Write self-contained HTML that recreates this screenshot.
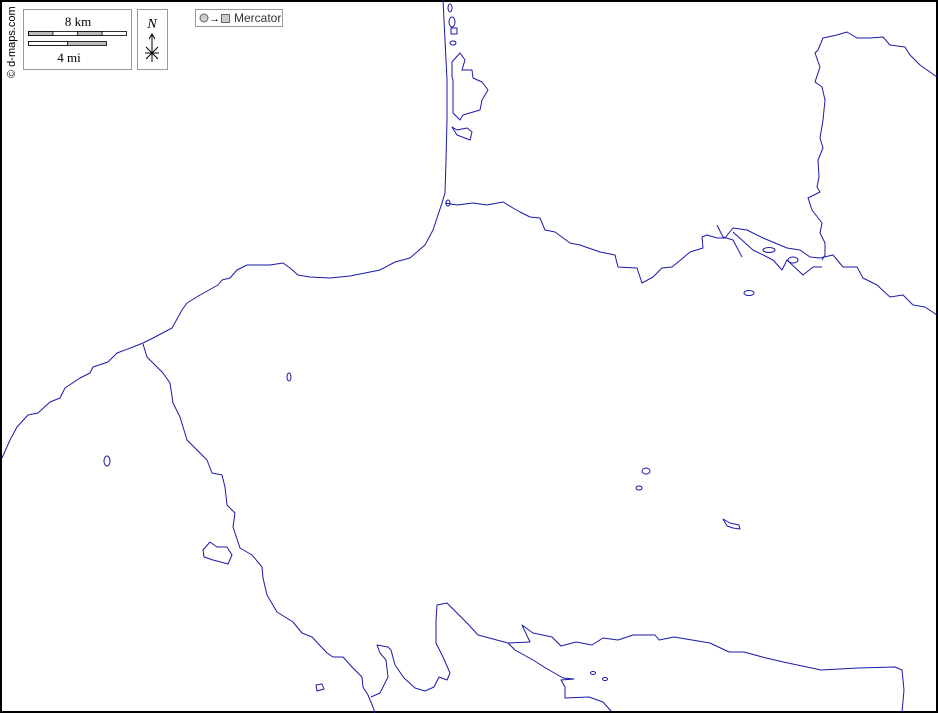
<!DOCTYPE html>
<html><head><meta charset="utf-8"><style>
html,body{margin:0;padding:0;background:#fff}
svg{display:block}
text{font-family:"Liberation Serif",serif}
</style></head><body>
<svg width="938" height="713" viewBox="0 0 938 713" xmlns="http://www.w3.org/2000/svg">
<rect x="1" y="1" width="936" height="711" fill="#fff" stroke="#000" stroke-width="2"/>
<g fill="none" stroke="#1a1aa8" stroke-width="1" stroke-linejoin="round">
<polyline points="443,0 445,40 447,80 447,120 446,160 445,193 442,203 433,230 425,245 410,258 395,262 380,270 350,276 330,278 310,277 298,275 290,268 283,263 270,265 247,265 237,270 230,278 222,280 218,285 200,295 187,303 182,310 172,328 153,338 143,343 133,347 117,353 108,362 93,367 90,373 80,378 65,388 60,398 50,402 38,413 28,415 17,427 10,440 2,458"/>
<polyline points="143,344 147,357 163,373 170,383 173,403 180,417 187,440 197,450 207,460 212,473 222,475 225,487 227,505 235,513 233,527 240,548 252,555 262,567 263,578 267,595 277,612 293,622 302,633 312,637 327,653 333,657 343,657 352,667 362,677 363,687 368,695 373,707 375,713"/>
<polygon points="203,550 210,542 217,547 227,547 232,555 228,564 213,560 204,557"/>
<polygon points="452,77 452,62 460,53 465,60 462,70 472,70 473,78 482,82 488,90 482,100 480,110 463,115 460,120 453,113 453,80"/>
<polygon points="452,127 457,135 470,140 472,132 467,128 457,130"/>
<ellipse cx="450" cy="8" rx="2" ry="4"/>
<ellipse cx="452" cy="22" rx="3" ry="5"/>
<rect x="451" y="28" width="6" height="6"/>
<ellipse cx="453" cy="43" rx="3" ry="2"/>
<ellipse cx="448" cy="203" rx="2" ry="3"/>
<polyline points="445,203 457,205 473,203 487,205 503,202 513,208 520,212 530,217 540,218 545,230 555,232 570,243 580,245 600,252 615,255 618,267 637,268 642,283 653,277 662,268 672,267 683,258 690,252 703,248 702,237 707,235 717,238 725,238 733,228 747,230 763,238 787,248 800,250 810,257 820,258 833,255 843,267 857,267 863,278 877,285 890,297 903,295 913,305 925,307 937,315"/>
<polyline points="717,225 723,237 733,240 742,257"/>
<polyline points="733,232 753,250 773,260 782,270 787,260 803,275 813,267 822,267"/>
<ellipse cx="769" cy="250" rx="6" ry="2.5"/>
<ellipse cx="793" cy="260" rx="5" ry="3"/>
<ellipse cx="749" cy="293" rx="5" ry="2.5"/>
<polyline points="937,77 920,65 910,55 905,47 890,45 883,37 870,38 857,38 847,32 837,35 823,38 818,50 815,53 820,67 815,82 822,87 825,100 823,120 820,138 823,148 818,160 819,177 817,187 820,192 808,198 812,210 822,223 820,233 825,243 825,255 822,260"/>
<ellipse cx="289" cy="377" rx="2" ry="4"/>
<ellipse cx="107" cy="461" rx="3" ry="5"/>
<ellipse cx="646" cy="471" rx="4" ry="3"/>
<ellipse cx="639" cy="488" rx="3" ry="2"/>
<polygon points="723,519 727,526 733,528 740,529 739,525 730,523"/>
<polyline points="371,697 380,693 388,677 386,660 380,653 377,645 388,647 391,650 395,665 404,678 415,688 425,691 434,687 439,677 447,680 450,673 443,657 436,643 436,620 437,605 447,603 467,623 478,635 508,643 530,642 522,625 533,633 552,637 561,646 576,642 592,645 603,638 618,640 633,635 655,635 659,640 674,637 692,640 710,643 729,652 744,652 766,658 788,663 821,670 858,668 895,667 902,670 904,690 902,712"/>
<polyline points="508,643 515,650 533,660 544,667 563,678 574,679 561,680 565,687 565,698 589,697 603,702 611,711"/>
<ellipse cx="593" cy="673" rx="2.5" ry="1.5"/>
<ellipse cx="605" cy="679" rx="2.5" ry="1.5"/>
<polygon points="316,685 322,684 324,689 317,691"/>
</g>
<text transform="translate(15,78) rotate(-90)" font-size="11" style="font-family:'Liberation Sans',sans-serif">© d-maps.com</text>
<rect x="23.5" y="9.5" width="108" height="60" fill="#fff" stroke="#999"/>
<text x="78" y="26" font-size="13" text-anchor="middle">8 km</text>
<rect x="28.5" y="31.5" width="98" height="4" fill="#fff" stroke="#000" stroke-width="0.8"/>
<rect x="28.5" y="31.5" width="24.5" height="4" fill="#bbb" stroke="#000" stroke-width="0.8"/>
<rect x="77.5" y="31.5" width="24.5" height="4" fill="#bbb" stroke="#000" stroke-width="0.8"/>
<rect x="28.5" y="41.5" width="78" height="4" fill="#bbb" stroke="#000" stroke-width="0.8"/>
<rect x="28.5" y="41.5" width="39" height="4" fill="#fff" stroke="#000" stroke-width="0.8"/>
<text x="69" y="62" font-size="13" text-anchor="middle">4 mi</text>
<rect x="137.5" y="9.5" width="30" height="60" fill="#fff" stroke="#999"/>
<text x="152" y="28" font-size="14" font-style="italic" text-anchor="middle">N</text>
<g stroke="#000" stroke-width="1" fill="none">
<line x1="152" y1="34" x2="152" y2="62"/>
<polyline points="149,39 152,34 155,39"/>
<line x1="145" y1="53" x2="159" y2="53"/>
<line x1="146" y1="47" x2="158" y2="59"/>
<line x1="158" y1="47" x2="146" y2="59"/>
</g>
<rect x="195.5" y="9.5" width="87" height="17" fill="#fff" stroke="#999"/>
<circle cx="204" cy="18" r="4" fill="#ccc" stroke="#666"/>
<text x="209" y="22" font-size="11" style="font-family:'Liberation Sans',sans-serif">→</text>
<rect x="221.5" y="14.5" width="8" height="8" fill="#ccc" stroke="#666"/>
<text x="234" y="22" font-size="12" style="font-family:'Liberation Sans',sans-serif" fill="#333">Mercator</text>
</svg>
</body></html>
